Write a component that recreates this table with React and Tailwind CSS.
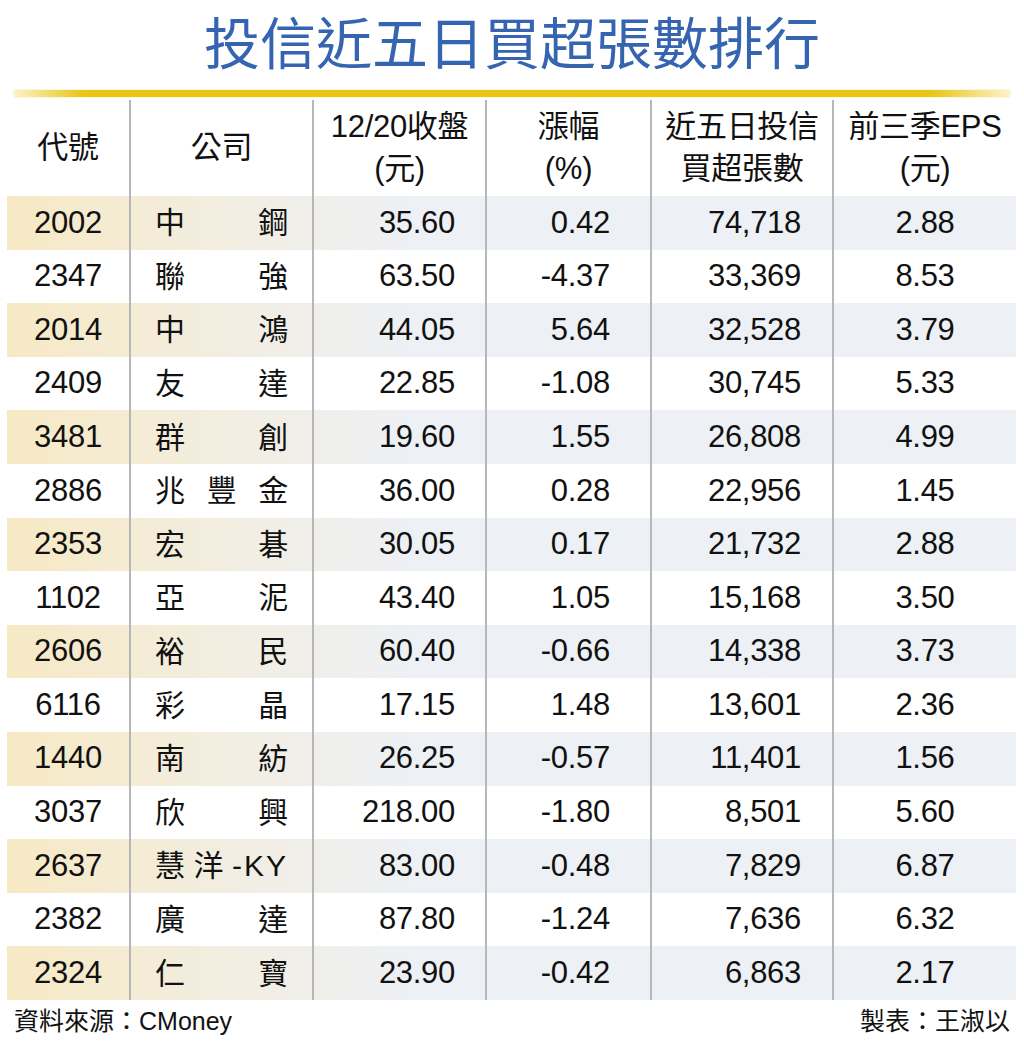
import React from 'react';

const ROWS = [
  ['2002', '中鋼', '35.60', '0.42', '74,718', '2.88'],
  ['2347', '聯強', '63.50', '-4.37', '33,369', '8.53'],
  ['2014', '中鴻', '44.05', '5.64', '32,528', '3.79'],
  ['2409', '友達', '22.85', '-1.08', '30,745', '5.33'],
  ['3481', '群創', '19.60', '1.55', '26,808', '4.99'],
  ['2886', '兆豐金', '36.00', '0.28', '22,956', '1.45'],
  ['2353', '宏碁', '30.05', '0.17', '21,732', '2.88'],
  ['1102', '亞泥', '43.40', '1.05', '15,168', '3.50'],
  ['2606', '裕民', '60.40', '-0.66', '14,338', '3.73'],
  ['6116', '彩晶', '17.15', '1.48', '13,601', '2.36'],
  ['1440', '南紡', '26.25', '-0.57', '11,401', '1.56'],
  ['3037', '欣興', '218.00', '-1.80', '8,501', '5.60'],
  ['2637', '慧洋-KY', '83.00', '-0.48', '7,829', '6.87'],
  ['2382', '廣達', '87.80', '-1.24', '7,636', '6.32'],
  ['2324', '仁寶', '23.90', '-0.42', '6,863', '2.17'],
];

const GRID = 'grid grid-cols-[122px_183px_173px_165px_182px_184px]';
const LINE = 'border-l-2 border-[#b7b7b7]';

// company names are spread across the cell; a latin suffix stays in one piece
const splitName = (name) => name.match(/[\u4e00-\u9fff]|[^\u4e00-\u9fff]+/g);

const HeadCell = ({ lines, first }) => (
  <div className={`flex flex-col items-center justify-center leading-[42px] ${first ? '' : LINE}`}>
    {lines.map(l => <span key={l}>{l}</span>)}
  </div>
);

const Row = ({ row, shaded }) => {
  const [code, name, close, pct, vol, eps] = row;
  return (
    <div className={`${GRID} h-[53.6px] ${shaded ? 'bg-linear-to-r from-[#f7e9c4] via-[#f1eee5] via-25% to-[#edf0f4] to-40%' : ''}`}>
      <div className="flex items-center justify-center">{code}</div>
      <div className={`${LINE} flex items-center justify-between pl-[24px] pr-[24px] text-[30px]`}>
        {splitName(name).map((c, i) => <span key={i} className={c.length > 1 ? 'tracking-[2px]' : ''}>{c}</span>)}
      </div>
      <div className={`${LINE} flex items-center justify-end pr-[30px]`}>{close}</div>
      <div className={`${LINE} flex items-center justify-end pr-[40px]`}>{pct}</div>
      <div className={`${LINE} flex items-center justify-end pr-[31px]`}>{vol}</div>
      <div className={`${LINE} flex items-center justify-center`}>{eps}</div>
    </div>
  );
};

export default function App() {
  return (
    <div className="w-[1024px] h-[1044px] bg-white text-[#111] font-['Liberation_Sans','Noto_Sans_CJK_TC',sans-serif] overflow-hidden">
      <div className="h-[80px] flex items-center justify-center text-[56px] leading-[66px] font-normal text-[#3564b0] font-['Noto_Sans_CJK_TC',sans-serif]">
        投信近五日買超張數排行
      </div>

      <div className="mt-[10px] ml-[14px] w-[996px] h-[7px] bg-[linear-gradient(to_right,#fbf3cc,#e9c515_7%,#e9c515_92%,#fbf3cc)] shadow-[0_0_2px_#f3df80]" />

      <div className="ml-[7px] mt-[3px] w-[1009px] text-[31px] tracking-[-0.3px]">
        <div className={`${GRID} h-[96px]`}>
          <HeadCell first lines={['代號']} />
          <HeadCell lines={['公司']} />
          <HeadCell lines={['12/20收盤', '(元)']} />
          <HeadCell lines={['漲幅', '(%)']} />
          <HeadCell lines={['近五日投信', '買超張數']} />
          <HeadCell lines={['前三季EPS', '(元)']} />
        </div>
        {ROWS.map((r, i) => <Row key={r[0]} row={r} shaded={i % 2 === 0} />)}
      </div>

      <div className="flex justify-between items-center h-[44px] px-[14px] text-[25px]">
        <span>資料來源：CMoney</span>
        <span>製表：王淑以</span>
      </div>
    </div>
  );
}
